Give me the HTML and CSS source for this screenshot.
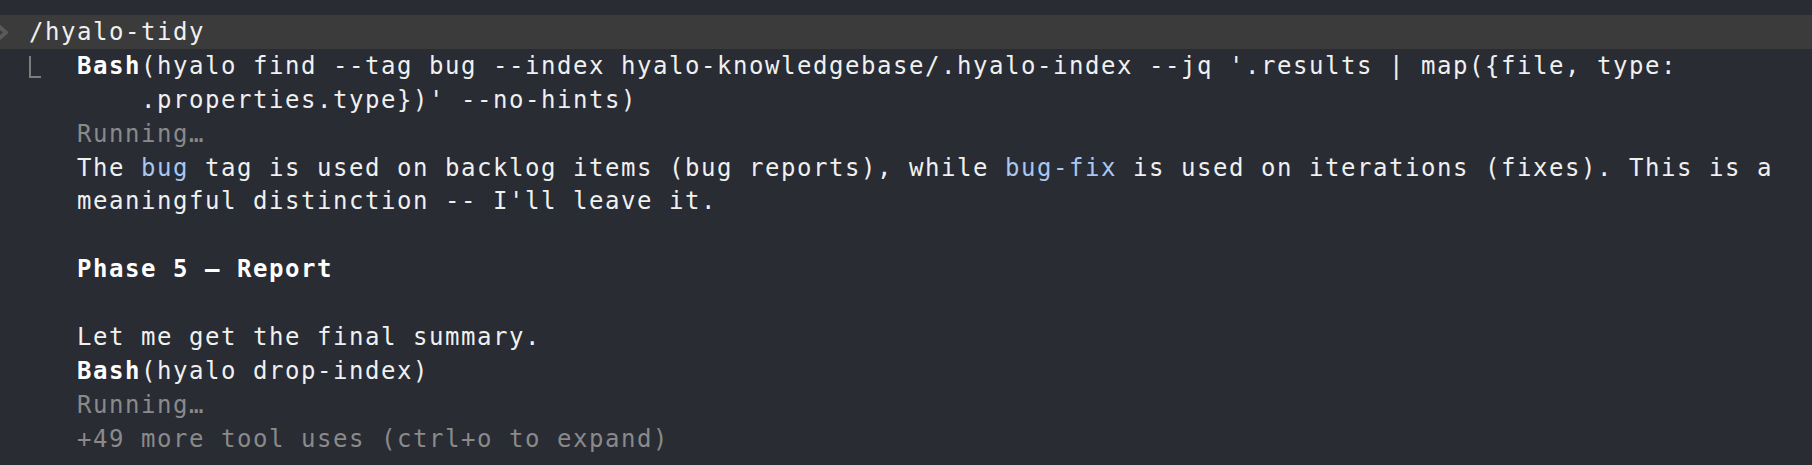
FILE: index.html
```html
<!DOCTYPE html>
<html lang="en">
<head>
<meta charset="utf-8">
<title>hyalo-tidy</title>
<link rel="stylesheet" href="styles.css">
</head>
<body>
<div class="term">
  <div class="row prompt">
    <span class="chev"><svg width="13" height="34" viewBox="0 0 13 34"><polyline points="-5,8 6,17.5 -5,27" fill="none" stroke="#5a5a5a" stroke-width="4" stroke-linecap="round" stroke-linejoin="round"/></svg></span><span class="cmd">/hyalo-tidy</span>
  </div>
  <div class="row tool">
    <span class="elbow"></span><span class="line"><b>Bash</b>(hyalo find --tag bug --index hyalo-knowledgebase/.hyalo-index --jq '.results | map({file, type:</span>
  </div>
  <div class="row cont">.properties.type})' --no-hints)</div>
  <div class="row ind dim">Running…</div>
  <div class="row ind">The <span class="code">bug</span> tag is used on backlog items (bug reports), while <span class="code">bug-fix</span> is used on iterations (fixes). This is a</div>
  <div class="row ind">meaningful distinction -- I'll leave it.</div>
  <div class="row ind"></div>
  <div class="row ind"><b>Phase 5 — Report</b></div>
  <div class="row ind"></div>
  <div class="row ind">Let me get the final summary.</div>
  <div class="row ind"><b>Bash</b>(hyalo drop-index)</div>
  <div class="row ind dim">Running…</div>
  <div class="row ind dim">+49 more tool uses (ctrl+o to expand)</div>
</div>
</body>
</html>
```
FILE: styles.css
```css
html, body {
  margin: 0;
  padding: 0;
  background: #292c33;
}
body {
  width: 1812px;
  height: 465px;
  overflow: hidden;
}
.term {
  padding-top: 15px;
  font-family: "DejaVu Sans Mono", "Liberation Mono", monospace;
  font-size: 24px;
  letter-spacing: 1.55px;
  color: #f0f0f0;
}
.row {
  box-sizing: border-box;
  height: 33.9px;
  padding-top: 2px;
  line-height: 31.9px;
  white-space: pre;
  display: flex;
  align-items: center;
}
.row b {
  font-weight: bold;
  color: #ffffff;
}
.prompt {
  background: #3b3b3b;
  padding-top: 0;
  line-height: 33.9px;
}
.prompt .cmd {
  padding-top: 2px;
}
.chev {
  display: flex;
  width: 13px;
  height: 34px;
  margin-right: 16px;
}
.tool {
  padding-left: 29px;
}
.elbow {
  display: inline-block;
  box-sizing: border-box;
  width: 12px;
  height: 22px;
  margin-right: 36px;
  margin-bottom: 5px;
  border-left: 2px solid #7d7d7d;
  border-bottom: 2px solid #7d7d7d;
  align-self: flex-end;
}
.cont {
  padding-left: 141px;
}
.ind {
  padding-left: 77px;
}
.dim {
  color: #8a8a8a;
}
.code {
  color: #a8c6ef;
}
```
